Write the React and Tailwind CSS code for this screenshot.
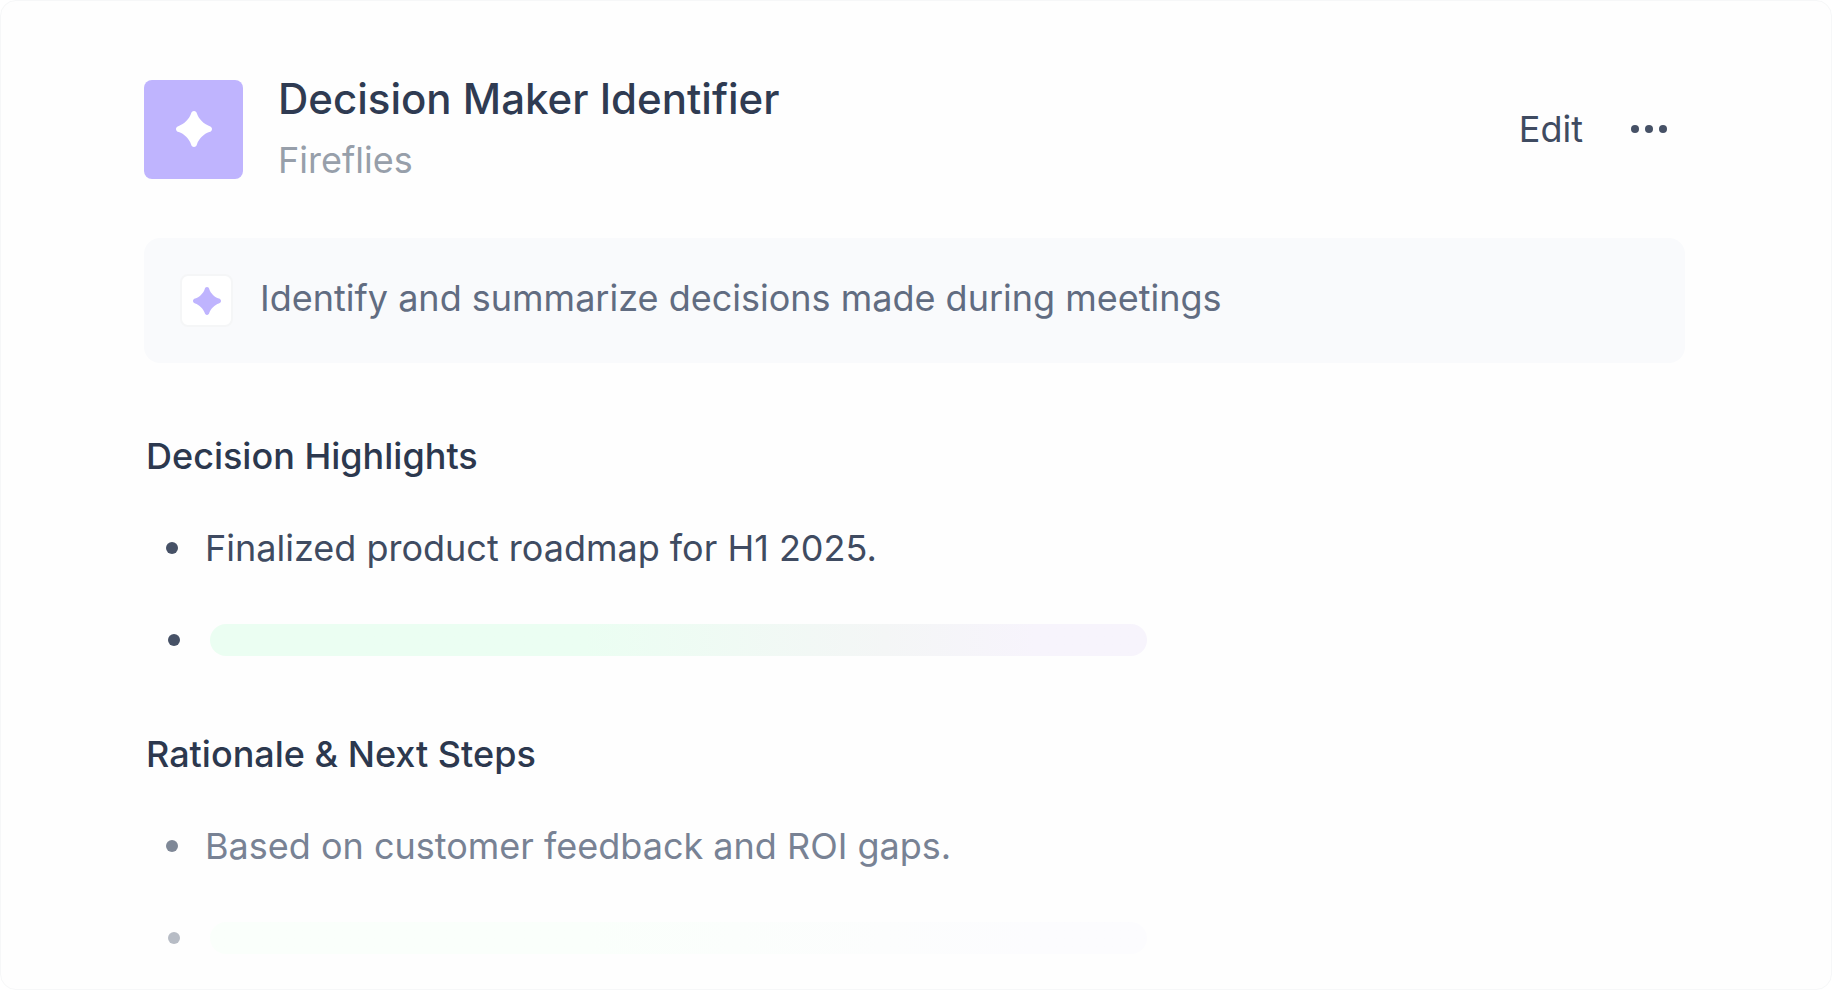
import React from 'react';

const sections = [
  {
    title: 'Decision Highlights',
    text: 'Finalized product roadmap for H1 2025.',
    textColor: 'text-[#3f4b61]',
    dotColor: 'bg-[#465166]',
    lastDotColor: 'bg-[#465166]',
    bar: 'from-[#ebfef2] from-40% via-[#f4f6f6] via-72% to-[#f7f4fc] to-88%',
  },
  {
    title: 'Rationale & Next Steps',
    text: 'Based on customer feedback and ROI gaps.',
    textColor: 'text-[#788294]',
    dotColor: 'bg-[#7f8897]',
    lastDotColor: 'bg-[#b7bcc5]',
    bar: 'from-[#fafffb] from-40% via-[#fcfdfd] via-72% to-[#fcfcfe] to-88%',
  },
];

const Sparkle = ({ className }) => (
  <svg viewBox="0 0 36 36" fill="currentColor" className={className} aria-hidden="true">
    <path d="M18 0C19.6 0 20.5 1 21 2.8C22.4 7.6 28.2 13.4 33.2 14.9C35 15.4 36 16.4 36 18C36 19.6 35 20.6 33.2 21.1C28.2 22.6 22.4 28.4 21 33.2C20.5 35 19.6 36 18 36C16.4 36 15.5 35 15 33.2C13.6 28.4 7.8 22.6 2.8 21.1C1 20.6 0 19.6 0 18C0 16.4 1 15.4 2.8 14.9C7.8 13.4 13.6 7.6 15 2.8C15.5 1 16.4 0 18 0Z" />
  </svg>
);

const Section = ({ section }) => (
  <section>
    <h2 className="pl-[2px] text-4xl/12 font-medium text-[#2c384e]">{section.title}</h2>
    <ul className="mt-11 flex flex-col gap-11 pl-[22px]">
      <li className={`flex items-center gap-[27px] text-4xl/12 ${section.textColor}`}>
        <span className={`size-3 shrink-0 rounded-full ${section.dotColor}`} />
        <span>{section.text}</span>
      </li>
      <li className="flex h-12 items-center gap-[30px] pl-[2px]">
        <span className={`size-3 shrink-0 rounded-full ${section.lastDotColor}`} />
        <span className={`h-8 w-full max-w-[937px] rounded-full bg-linear-to-r ${section.bar}`} />
      </li>
    </ul>
  </section>
);

const App = () => {
  return (
    <main className="min-h-screen rounded-2xl border border-[#f6f7f8] bg-[#fefefe] pt-[73px] pr-[146px] pl-[143px] font-['Inter',sans-serif]">
      <header className="flex items-center justify-between">
        <div className="flex items-center gap-[35px]">
          <div className="flex size-[99px] items-center justify-center rounded-lg bg-[#bfb4fe]">
            <Sparkle className="size-9 text-white" />
          </div>
          <div className="flex flex-col gap-3">
            <h1 className="text-[42px]/[50px] font-medium text-[#2f3b52]">Decision Maker Identifier</h1>
            <p className="text-4xl/12 text-[#979faa]">Fireflies</p>
          </div>
        </div>
        <div className="flex items-center gap-12 pr-[18px] text-[#3f4b61]">
          <button className="text-4xl/12">Edit</button>
          <button aria-label="More options" className="flex gap-[6px] py-4">
            <span className="size-2 rounded-full bg-[#465166]" />
            <span className="size-2 rounded-full bg-[#465166]" />
            <span className="size-2 rounded-full bg-[#465166]" />
          </button>
        </div>
      </header>

      <div className="mt-[54px] flex items-start gap-[27px] rounded-2xl bg-[#f9fafc] p-9">
        <div className="flex size-[53px] shrink-0 items-center justify-center rounded-lg border-2 border-[#f5f6f7] bg-white">
          <Sparkle className="size-7 text-[#bfb4fe]" />
        </div>
        <p className="text-4xl/12 text-[#616c81]">Identify and summarize decisions made during meetings</p>
      </div>

      <div className="mt-[69px] flex flex-col gap-[66px]">
        {sections.map((section) => (
          <Section key={section.title} section={section} />
        ))}
      </div>
    </main>
  );
};

export default App;
